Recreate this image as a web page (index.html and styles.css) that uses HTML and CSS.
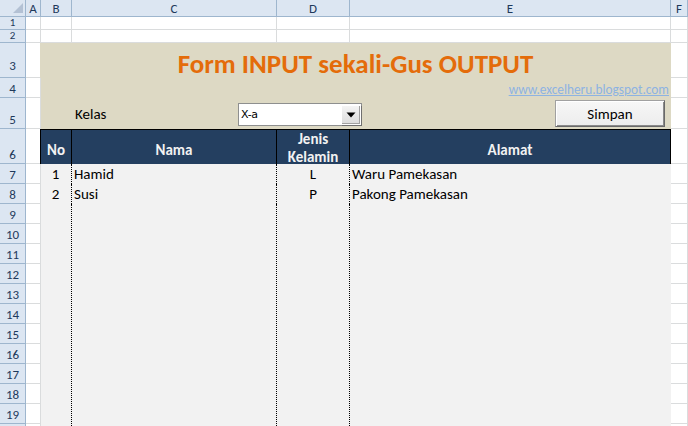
FILE: index.html
```html
<!DOCTYPE html>
<html>
<head>
<meta charset="utf-8">
<link rel="stylesheet" href="styles.css">
</head>
<body>
<div class="sheet">
  <div class="corner"><svg width="25" height="16" viewBox="0 0 25 16"><polygon points="23,3 23,13 13,13" fill="#b3c1d4"/></svg></div>
  <div class="ch">A</div><div class="ch">B</div><div class="ch">C</div><div class="ch">D</div><div class="ch">E</div><div class="ch">F</div>

  <div class="rh rh-small">1</div><div class="c"></div><div class="c"></div><div class="c"></div><div class="c"></div><div class="c"></div><div class="c"></div>
  <div class="rh rh-small">2</div><div class="c"></div><div class="c"></div><div class="c"></div><div class="c"></div><div class="c"></div><div class="c"></div>

  <div class="rh rh3">3</div><div class="c"></div>
  <div class="form">
    <div class="title">Form INPUT sekali-Gus OUTPUT</div>
    <div class="linkrow"><span class="link">www.excelheru.blogspot.com</span></div>
    <div class="controls">
      <span class="label">Kelas</span>
      <div class="combo"><span class="combo-text">X-a</span><span class="combo-btn"><svg width="10" height="6" viewBox="0 0 10 6"><polygon points="0.5,0.5 9.5,0.5 5,5.5" fill="#000"/></svg></span></div>
      <span></span>
      <div class="btn">Simpan</div>
    </div>
  </div>
  <div class="c"></div>
  <div class="rh">4</div><div class="c"></div><div class="c"></div>
  <div class="rh">5</div><div class="c"></div><div class="c"></div>

  <div class="rh">6</div><div class="c"></div>
  <div class="table">
    <div class="thead">
      <div class="th first">No</div>
      <div class="th">Nama</div>
      <div class="th two">Jenis<br>Kelamin</div>
      <div class="th">Alamat</div>
    </div>
    <div class="tbody">
      <div class="td ctr">1</div><div class="td">Hamid</div><div class="td ctr">L</div><div class="td last">Waru Pamekasan</div>
      <div class="td ctr">2</div><div class="td">Susi</div><div class="td ctr">P</div><div class="td last">Pakong Pamekasan</div>
      <div class="td"></div><div class="td"></div><div class="td"></div><div class="td last"></div>
    </div>
  </div>
  <div class="c"></div>
  <div class="rh">7</div><div class="c"></div><div class="c"></div>
  <div class="rh">8</div><div class="c"></div><div class="c"></div>
  <div class="rh">9</div><div class="c"></div><div class="c"></div>
  <div class="rh">10</div><div class="c"></div><div class="c"></div>
  <div class="rh">11</div><div class="c"></div><div class="c"></div>
  <div class="rh">12</div><div class="c"></div><div class="c"></div>
  <div class="rh">13</div><div class="c"></div><div class="c"></div>
  <div class="rh">14</div><div class="c"></div><div class="c"></div>
  <div class="rh">15</div><div class="c"></div><div class="c"></div>
  <div class="rh">16</div><div class="c"></div><div class="c"></div>
  <div class="rh">17</div><div class="c"></div><div class="c"></div>
  <div class="rh">18</div><div class="c"></div><div class="c"></div>
  <div class="rh">19</div><div class="c"></div><div class="c"></div>
  <div class="rh">20</div><div class="c"></div><div class="c"></div>
</div>
</body>
</html>
```

FILE: styles.css
```css
* { box-sizing: border-box; }
html, body {
  margin: 0;
  padding: 0;
  width: 688px;
  height: 426px;
  overflow: hidden;
  background: #fff;
}
body {
  font-family: Carlito, Lato, "Liberation Sans", sans-serif;
  font-size: 15px;
  color: #000;
}
.sheet {
  display: grid;
  grid-template-columns: 26px 15px 31px 205px 73px 321px 17px;
  grid-template-rows: 17px 13px 13px 35px 20px 31px 35px repeat(14, 20px);
  width: 688px;
}
.corner {
  background: #dce6f2;
  border-right: 1px solid #9eb6ce;
  border-bottom: 1px solid #9eb6ce;
  overflow: hidden;
}
.corner svg { display: block; }
.ch {
  background: #dce6f2;
  border-right: 1px solid #9eb6ce;
  border-bottom: 1px solid #9eb6ce;
  color: #1e395b;
  font-size: 13px;
  display: flex;
  align-items: center;
  justify-content: center;
  overflow: hidden;
}
.rh {
  background: #dce6f2;
  border-right: 1px solid #9eb6ce;
  border-bottom: 1px solid #9eb6ce;
  color: #1e395b;
  font-size: 13px;
  line-height: 13px;
  display: flex;
  align-items: flex-end;
  justify-content: center;
  padding-bottom: 2px;
  overflow: hidden;
}
.rh-small {
  font-size: 11px;
  line-height: 12px;
  padding-bottom: 0;
  align-items: center;
}
.rh3 { padding-bottom: 5px; }
.c {
  border-right: 1px solid #dadcdd;
  border-bottom: 1px solid #dadcdd;
}

/* form block */
.form {
  grid-column: span 4;
  grid-row: span 3;
  background: #ddd9c4;
  display: flex;
  flex-direction: column;
  margin-left: -1px;
}
.title {
  height: 35px;
  padding-top: 6px;
  display: flex;
  align-items: center;
  justify-content: center;
  color: #e46c0a;
  font-weight: bold;
  font-size: 27px;
  line-height: 30px;
  white-space: nowrap;
}
.linkrow {
  height: 20px;
  display: flex;
  justify-content: flex-end;
  align-items: flex-end;
  padding-right: 2px;
}
.link {
  color: #8db3e2;
  text-decoration: underline;
  font-size: 13.3px;
  line-height: 16px;
}
.controls {
  height: 31px;
  display: grid;
  grid-template-columns: 163px 124px 1fr 110px;
  padding-left: 35px;
  padding-right: 6px;
  align-items: start;
}
.label {
  margin-top: 6px;
  line-height: 20px;
}
.combo {
  margin-top: 5px;
  height: 23px;
  background: #fff;
  border: 1px solid #8e8f8f;
  display: flex;
  align-items: center;
  justify-content: space-between;
  padding: 0 0 0 2px;
}
.combo-text {
  font-family: "DejaVu Sans", "Liberation Sans", sans-serif;
  font-size: 11px;
  letter-spacing: -0.3px;
}
.combo-btn {
  width: 20px;
  height: 20px;
  background: linear-gradient(#f4f4f4, #dcdcdc);
  border: 1px solid #fff;
  box-shadow: 1px 1px 0 #6f6f6f, inset -1px -1px 0 #a0a0a0;
  display: flex;
  align-items: center;
  justify-content: center;
}
.combo-btn svg { display: block; }
.btn {
  margin-top: 2px;
  height: 27px;
  background: linear-gradient(#f7f7f7, #ececec);
  border: 1px solid #a0a0a0;
  box-shadow: inset 1px 1px 0 #fff, inset -1px -1px 0 #8a8a8a;
  border-right-color: #696969;
  border-bottom-color: #696969;
  display: flex;
  align-items: center;
  justify-content: center;
  font-size: 15px;
}

/* table block */
.table {
  grid-column: span 4;
  grid-row: span 15;
  display: flex;
  flex-direction: column;
  margin-left: -1px;
}
.thead {
  height: 35px;
  display: grid;
  grid-template-columns: 32px 205px 73px 321px;
}
.th {
  background: #243f60;
  color: #f2f2f2;
  font-weight: bold;
  font-size: 15px;
  border-top: 1px solid #000;
  border-bottom: 1px solid #000;
  border-right: 1px solid #000;
  display: flex;
  align-items: center;
  justify-content: center;
  text-align: center;
  padding-top: 3px;
}
.th.first { border-left: 1px solid #000; }
.th.two {
  line-height: 18px;
  padding-top: 0;
}
.tbody {
  flex: 1;
  display: grid;
  grid-template-columns: 32px 205px 73px 321px;
  grid-template-rows: 20px 20px 1fr;
  background: #f2f2f2;
}
.td {
  border-right: 1px dotted #000;
  line-height: 20px;
  padding-left: 2px;
  white-space: nowrap;
}
.td.ctr { text-align: center; padding-left: 0; }
.td.last { border-right: none; }
```
